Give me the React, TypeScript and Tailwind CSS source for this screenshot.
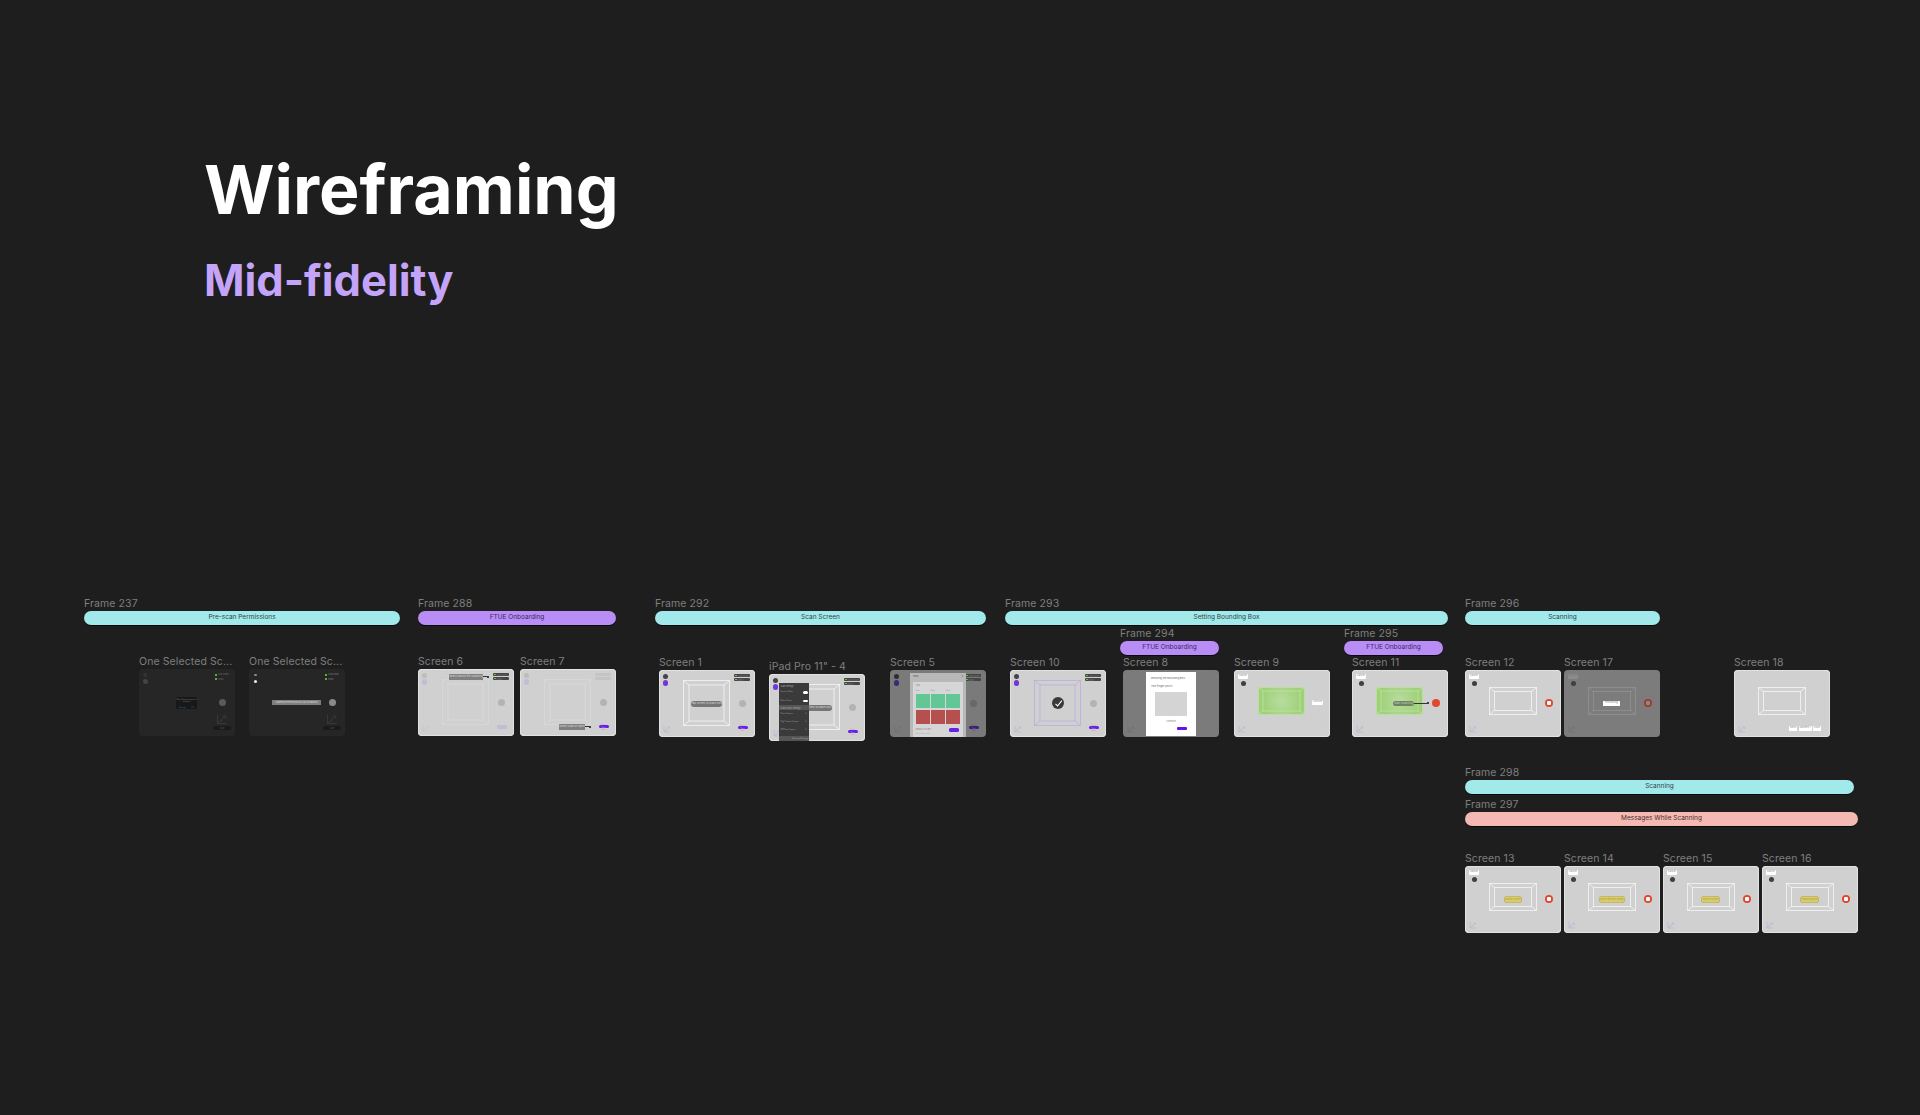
import React from "react";

type P = { className?: string; children?: React.ReactNode };

const Label = ({ className = "", children }: P) => (
  <div className={`h-[15px] text-[10.5px] leading-[16px] tracking-[0.1px] text-[#7f7f7f] whitespace-nowrap ${className}`}>{children}</div>
);

const Pill = ({ className = "", children }: P) => (
  <div className={`h-[14px] rounded-full flex items-center justify-center text-[6.5px] text-[#2f4648] shadow-[0_1px_0_#0a0a0a] whitespace-nowrap ${className}`}>
    {children}
  </div>
);

const Teal = ({ className = "", children }: P) => <Pill className={`bg-[#a1e9eb] ${className}`}>{children}</Pill>;
const Purple = ({ className = "", children }: P) => <Pill className={`bg-[#b98df6] text-[#3a2763] ${className}`}>{children}</Pill>;

const Screen = ({ className = "", children }: P) => (
  <div className={`relative w-[96px] h-[67px] rounded-[4px] overflow-hidden ${className}`}>{children}</div>
);

const Light = ({ className = "", children }: P) => (
  <Screen className={`bg-[#d0d0d0] shadow-[inset_0_0_0_1px_#e2e2e2] ${className}`}>{children}</Screen>
);

const Card = ({ label, className = "", children }: { label: string; className?: string; children?: React.ReactNode }) => (
  <div className={`flex flex-col w-[96px] ${className}`}>
    <Label>{label}</Label>
    {children}
  </div>
);

const Dot = ({ className = "" }: P) => <div className={`absolute rounded-full ${className}`} />;

const Tag = ({ className = "", children }: P) => (
  <div className={`flex items-center justify-center text-[2.7px] leading-none whitespace-nowrap overflow-hidden ${className}`}>{children}</div>
);

const Box = ({
  className = "",
  w,
  h,
  ix = 6,
  iy = 5,
  color = "#f6f6f6",
  sw = 0.8,
}: {
  className?: string;
  w: number;
  h: number;
  ix?: number;
  iy?: number;
  color?: string;
  sw?: number;
}) => (
  <svg className={`absolute ${className}`} width={w} height={h} viewBox={`0 0 ${w} ${h}`} fill="none" stroke={color} strokeWidth={sw}>
    <rect x="0.5" y="0.5" width={w - 1} height={h - 1} />
    <rect x={ix} y={iy} width={w - ix * 2} height={h - iy * 2} />
    <path d={`M0.5 0.5L${ix} ${iy}M${w - 0.5} 0.5L${w - ix} ${iy}M0.5 ${h - 0.5}L${ix} ${h - iy}M${w - 0.5} ${h - 0.5}L${w - ix} ${h - iy}`} />
  </svg>
);

const WideBox = ({ color }: { color?: string }) => <Box className="left-[24px] top-[17px]" w={48} h={28} ix={5.5} iy={4.5} color={color} />;
const TallBox = ({ color, sw }: { color?: string; sw?: number }) => <Box className="left-[24px] top-[10px]" w={47} h={46} color={color} sw={sw} />;

const Cube = ({ className = "left-[4px] top-[55px]", color = "#b5aed0", size = 8 }: { className?: string; color?: string; size?: number }) => (
  <svg className={`absolute ${className}`} width={size} height={size} viewBox="0 0 8 8" fill="none" stroke={color} strokeWidth="0.6">
    <path d="M1 1V7H7" />
    <path d="M1 7L6 2" />
    <path d="M4.5 2H6.5V4" />
    <path d="M3 4.5L4.5 6" />
  </svg>
);

const Status = ({ faded = false }: { faded?: boolean }) => (
  <div className="absolute left-[75px] top-[4px] w-[16px] flex flex-col gap-[0.8px]">
    {["Scan Mode", "Ready"].map((t) => (
      <div
        key={t}
        className={`h-[3.2px] rounded-[1px] flex items-center gap-[1px] pl-[1px] text-[2px] leading-none overflow-hidden whitespace-nowrap ${
          faded ? "bg-[#c4c4c4] text-[#c4c4c4]" : "bg-[#454545] text-[#777777]"
        }`}
      >
        <span className={`block w-[1.6px] h-[1.6px] rounded-full shrink-0 ${faded ? "bg-[#c4c4c4]" : "bg-[#6fd13c]"}`} />
        {t}
      </div>
    ))}
  </div>
);

const DarkStatus = ({ text = "text-[#666666]" }: { text?: string }) => (
  <div className={`absolute left-[76px] top-[4px] w-[16px] flex flex-col gap-[1.5px] text-[2px] leading-[3px] ${text}`}>
    {["Scan Mode", "Ready"].map((t) => (
      <div key={t} className="flex items-center gap-[1px]">
        <span className="block size-[2px] bg-[#5fae2c]" />
        {t}
      </div>
    ))}
  </div>
);

const Rail = ({ faded = false, dim = false }: { faded?: boolean; dim?: boolean }) => (
  <div className="absolute left-[3.5px] top-[4px] w-[5.5px] flex flex-col items-center gap-[1.5px]">
    <span className={`block size-[4.5px] rounded-full ${faded ? "bg-[#bdbdbd]" : dim ? "bg-[#2e2e2e]" : "bg-[#444444]"}`} />
    <span className={`block size-[5.5px] rounded-full ${faded ? "bg-[#c2bcd8]" : dim ? "bg-[#3f2a70]" : "bg-[#7336dc]"}`} />
  </div>
);

const Shutter = ({ className = "bg-[#b3b3b3]" }: P) => <Dot className={`left-[80px] top-[29.5px] size-[7px] ${className}`} />;

const ScanBtn = ({ className = "left-[78.5px] top-[54px]", dark = false }: { className?: string; dark?: boolean }) => (
  <div className={`absolute w-[10px] flex flex-col items-center text-[1.8px] leading-[2px] ${dark ? "text-[#555555]" : "text-[#a5a5a5]"} ${className}`}>
    <span>Scan</span>
    <span className={`w-[10px] h-[3.4px] rounded-[1.5px] flex items-center justify-center ${dark ? "bg-[#3b1f7a] text-[#7f6fa8]" : "bg-[#6a1ee6] text-[#b9a0f5]"}`}>Start</span>
    <span>Stop</span>
  </div>
);

const Cancel = ({ className = "bg-white text-[#8a8a8a]" }: P) => (
  <div className="absolute left-[4px] top-[4px] flex flex-col items-center gap-[2px]">
    <Tag className={`w-[10px] h-[5px] rounded-[1px] !text-[2.4px] ${className}`}>Cancel</Tag>
    <span className="block size-[5px] rounded-full bg-[#3f3f3f]" />
  </div>
);

const Red = ({ dim = false }: { dim?: boolean }) => (
  <div className={`absolute left-[79.5px] top-[29px] size-[8px] rounded-full flex items-center justify-center ${dim ? "bg-[#9c3a2c]" : "bg-[#e2452c]"}`}>
    <div className={`size-[4px] rounded-[1px] ${dim ? "bg-[#8a8a8a]" : "bg-white"}`} />
  </div>
);

const GreenBox = () => (
  <div className="absolute left-[24px] top-[16.5px] w-[47px] h-[28px] bg-[radial-gradient(circle,#b9dc9f_0%,#a0d17a_70%)]">
    <Box className="left-0 top-0" w={47} h={28} ix={5} iy={4} color="#bfe3a6" />
  </div>
);

const Pointer = ({ className = "" }: P) => (
  <div className={`absolute h-[2px] flex items-center ${className}`}>
    <span className="block flex-1 h-[0.6px] bg-[#333333]" />
    <span className="block size-[2px] rounded-full bg-[#111111]" />
  </div>
);

const Toggle = ({ label }: { label: string }) => (
  <div className="h-[8.5px] px-[1.5px] flex items-center justify-between text-[1.8px] text-[#999999] leading-none">
    <span>{label}</span>
    <span className="block w-[4.5px] h-[2.5px] rounded-full bg-white" />
  </div>
);

const Drawer = () => (
  <div className="absolute left-[10px] top-[9px] w-[30px] h-[58px] bg-[#3a3a3a] flex flex-col">
    <div className="h-[5px] px-[1.5px] flex items-center text-[2px] text-[#aaaaaa] leading-none">Scan Settings</div>
    <Toggle label="Scanner Mode" />
    <Toggle label="Metric Preset" />
    <div className="h-[5px] px-[1.5px] bg-[#555555] flex items-center text-[2px] text-[#aaaaaa] leading-none">Scan Quality Settings</div>
    {["Photo Capture", "High Feature Capture", "HDR Cap Capture"].map((t) => (
      <div key={t} className="h-[8px] px-[1.5px] flex items-center justify-between text-[1.8px] text-[#999999] leading-none">
        <span>{t}</span>
        <span className="text-[#777777]">On</span>
      </div>
    ))}
    <div className="mt-auto h-[5px] bg-[#555555] flex items-center justify-end pr-[1px] text-[1.8px] text-[#aaaaaa] leading-none">Advanced Settings</div>
  </div>
);

const HelpModal = () => (
  <div className="absolute left-[20px] top-[2.5px] w-[56px] h-[64.5px] bg-[#b8b8b8] flex flex-col">
    <div className="h-[9px] shrink-0 px-[3px] flex items-center justify-between text-[2.4px] text-[#555555] leading-none">
      <span>Help</span>
      <span>x</span>
    </div>
    <div className="mx-[3px] flex-1 bg-[#d6d6d6] px-[2.5px] pt-[3px] flex flex-col">
      <span className="text-[2.2px] text-[#888888] leading-none">Tips</span>
      <div className="mt-[2.5px] grid grid-cols-3 gap-x-[1px] gap-y-[2px] text-[1.6px] text-[#999999] leading-[3px]">
        <span>Great</span>
        <span>Great</span>
        <span>Great</span>
        <div className="h-[14px] bg-[#62c795]" />
        <div className="h-[14px] bg-[#62c795]" />
        <div className="h-[14px] bg-[#62c795]" />
        <div className="h-[14px] bg-[#b5504f]" />
        <div className="h-[14px] bg-[#b5504f]" />
        <div className="h-[14px] bg-[#b5504f]" />
      </div>
      <div className="mt-[4px] flex items-center justify-between pr-[2px] text-[2.2px] text-[#888888] leading-none">
        <span>Ready to scan?</span>
        <span className="block w-[10px] h-[3.6px] rounded-[1.5px] bg-[#6a1ee6]" />
      </div>
      <span className="mt-[1px] text-[1.8px] text-[#aaaaaa] leading-none">Start when ready</span>
    </div>
  </div>
);

const Sheet = () => (
  <div className="absolute left-[23px] top-[1.5px] w-[50px] h-[64px] bg-white flex flex-col px-[5px] pt-[5px] text-[2.7px] leading-[3px] text-[#666666] whitespace-nowrap">
    <span>Resizing the Bounding Box</span>
    <span className="mt-[5px]">Two finger pinch</span>
    <div className="mt-[4px] mx-[4px] h-[24px] bg-[#d4d4d4]" />
    <span className="mt-[4px] self-center text-[2.2px] text-[#777777]">Continue</span>
    <div className="mt-[4px] ml-[26px] w-[10px] h-[3.5px] rounded-[1px] bg-[#6a0fe8]" />
  </div>
);

const Yellow = ({ className = "", children }: P) => (
  <Tag className={`absolute top-[30px] h-[6.5px] rounded-full bg-[#d8cc6c] text-[#a89c48] shadow-[inset_0_0_0_0.5px_#b0a65c] ${className}`}>{children}</Tag>
);

const Message = ({ label, w, children }: { label: string; w: string; children?: React.ReactNode }) => (
  <Card label={label}>
    <Light>
      <Cancel />
      <WideBox />
      <Yellow className={w}>{children}</Yellow>
      <Red />
      <Cube />
    </Light>
  </Card>
);

const DarkBase = ({ dot }: { dot: string }) => (
  <>
    <Shutter className={dot} />
    <Cube className="left-[77px] top-[44px]" color="#3a3a3a" size={12} />
    <Tag className="absolute left-[74px] top-[57px] w-[18px] h-[3.5px] rounded-full bg-[#1a1a1a] text-[#555555] !text-[2px]">Scan</Tag>
  </>
);

export default function App() {
  return (
    <div className="w-[1920px] h-[1115px] overflow-hidden bg-[#1e1e1e] font-['Inter',sans-serif]">
      <div className="pl-[204px] pt-[146px] flex flex-col">
        <h1 className="text-[68px] leading-[86px] font-bold text-white">Wireframing</h1>
        <h2 className="mt-[21px] text-[43.5px] leading-[54px] font-bold text-[#c4a4f9]">Mid-fidelity</h2>
      </div>

      <div className="mt-[289px] ml-[84px] flex items-start">
        {/* Frame 237 */}
        <div className="w-[316px] flex flex-col">
          <Label>Frame 237</Label>
          <Teal>Pre-scan Permissions</Teal>
          <div className="pt-[29px] pl-[55px] flex gap-[14px]">
            <Card label="One Selected Sc...">
              <Screen className="bg-[#262626]">
                <Dot className="left-[4px] top-[4px] size-[4px] bg-[#333333]" />
                <Dot className="left-[4px] top-[10px] size-[5px] bg-[#444444]" />
                <DarkStatus />
                <div className="absolute left-[37px] top-[28px] w-[21px] h-[12px] bg-[#181818] rounded-[1px] flex flex-col items-center justify-between py-[1px] text-[1.8px] leading-[2px] text-[#777777]">
                  <span className="text-center">Allow Camera access to continue</span>
                  <span className="w-full flex justify-around text-[#2f5f9e]">
                    <span>Settings</span>
                    <span>OK</span>
                  </span>
                </div>
                <DarkBase dot="bg-[#5a5a5a]" />
              </Screen>
            </Card>
            <Card label="One Selected Sc...">
              <Screen className="bg-[#262626]">
                <Dot className="left-[5px] top-[4.5px] size-[2.5px] bg-[#888888]" />
                <Dot className="left-[4.5px] top-[10.5px] size-[3.5px] bg-[#eeeeee]" />
                <DarkStatus text="text-[#777777]" />
                <Tag className="absolute left-[23px] top-[30.5px] w-[49px] h-[5.5px] rounded-[0.5px] bg-[#7f7f7f] text-[#d8d8d8]">Camera Permissions not Enabled</Tag>
                <DarkBase dot="bg-[#8a8a8a]" />
              </Screen>
            </Card>
          </div>
        </div>

        {/* Frame 288 */}
        <div className="ml-[18px] w-[198px] flex flex-col">
          <Label>Frame 288</Label>
          <Purple>FTUE Onboarding</Purple>
          <div className="pt-[29px] flex gap-[6px]">
            <Card label="Screen 6">
              <Light>
                <Rail faded />
                <TallBox color="#d9d9d9" />
                <Tag className="absolute left-[31px] top-[5px] w-[34px] h-[5.5px] rounded-[0.5px] bg-[#808080] text-[#dcdcdc]">Select device for scanning</Tag>
                <Pointer className="left-[65px] top-[6.5px] w-[6px]" />
                <Status />
                <Shutter />
                <Cube color="#c4c4c4" />
                <div className="absolute left-[79px] top-[56px] w-[9.5px] h-[3.5px] rounded-[1px] bg-[#c3bcd6]" />
              </Light>
            </Card>
            <Card label="Screen 7">
              <Light>
                <Rail faded />
                <TallBox color="#d9d9d9" />
                <Status faded />
                <Shutter />
                <Tag className="absolute left-[39px] top-[55px] w-[26px] h-[5.5px] rounded-[0.5px] bg-[#808080] text-[#dcdcdc]">Select scan or open</Tag>
                <Pointer className="left-[65px] top-[56.5px] w-[6px]" />
                <ScanBtn />
              </Light>
            </Card>
          </div>
        </div>

        {/* Frame 292 */}
        <div className="ml-[39px] w-[331px] flex flex-col">
          <Label>Frame 292</Label>
          <Teal>Scan Screen</Teal>
          <div className="pt-[30px] pl-[4px] flex items-start">
            <Card label="Screen 1">
              <Light>
                <Rail />
                <TallBox />
                <Tag className="absolute left-[32px] top-[31px] w-[31px] h-[5.5px] rounded-full bg-[#767676] text-[#d8d8d8]">Tap screen to place box</Tag>
                <Status />
                <Shutter />
                <Cube />
                <ScanBtn />
              </Light>
            </Card>
            <Card label={'iPad Pro 11" - 4'} className="ml-[14px] mt-[4px]">
              <Light>
                <Rail />
                <TallBox />
                <Tag className="absolute left-[32px] top-[31px] w-[31px] h-[5.5px] rounded-full bg-[#767676] text-[#d8d8d8] !justify-end pr-[1px]">Tap screen to place box</Tag>
                <Status />
                <Shutter />
                <Cube />
                <ScanBtn />
                <Drawer />
              </Light>
            </Card>
            <Card label="Screen 5" className="ml-[25px]">
              <Screen className="bg-[#7a7a7a]">
                <Rail dim />
                <Status />
                <Shutter className="bg-[#686868]" />
                <Cube color="#6e6e6e" />
                <ScanBtn className="left-[79px] top-[54px]" dark />
                <HelpModal />
              </Screen>
            </Card>
          </div>
        </div>

        {/* Frame 293 */}
        <div className="ml-[19px] w-[443px] flex flex-col">
          <Label>Frame 293</Label>
          <Teal>Setting Bounding Box</Teal>
          <div className="pt-px pl-[5px] flex items-end">
            <Card label="Screen 10">
              <Light>
                <Rail />
                <TallBox color="#bba8e2" sw={0.7} />
                <div className="absolute left-[42px] top-[27px] size-[12px] rounded-full bg-[#3a3a3a] flex items-center justify-center">
                  <svg width="9" height="9" viewBox="0 0 9 9" fill="none" stroke="#ffffff" strokeWidth="1.1">
                    <path d="M1.5 4.8L3.6 7L7.8 1.6" />
                  </svg>
                </div>
                <Status />
                <Shutter />
                <Cube />
                <ScanBtn />
              </Light>
            </Card>
            <div className="ml-[17px] flex flex-col w-[96px]">
              <div className="-ml-[3px] w-[99px]">
                <Label>Frame 294</Label>
                <Purple>FTUE Onboarding</Purple>
              </div>
              <Label>Screen 8</Label>
              <Screen className="bg-[#7b7b7b]">
                <Cube color="#6e6e6e" />
                <Sheet />
              </Screen>
            </div>
            <Card label="Screen 9" className="ml-[15px]">
              <Light>
                <Cancel />
                <GreenBox />
                <Tag className="absolute left-[78px] top-[29.5px] w-[11px] h-[5.5px] rounded-[1px] bg-white text-[#8a8a8a] !text-[2.4px]">Confirm</Tag>
                <Cube />
              </Light>
            </Card>
            <div className="ml-[22px] flex flex-col w-[96px]">
              <div className="-ml-[8px] w-[99px]">
                <Label>Frame 295</Label>
                <Purple>FTUE Onboarding</Purple>
              </div>
              <Label>Screen 11</Label>
              <Light>
                <Cancel />
                <GreenBox />
                <Tag className="absolute left-[41px] top-[30.5px] w-[21px] h-[5.5px] rounded-full bg-[#6f8264] text-[#c6d2bc]">Start Scanning</Tag>
                <Pointer className="left-[62px] top-[32px] w-[15px]" />
                <Dot className="left-[79.5px] top-[29px] size-[8px] bg-[#e2482e]" />
                <Cube />
              </Light>
            </div>
          </div>
        </div>

        {/* Frames 296 – 298 */}
        <div className="ml-[17px] w-[393px] flex flex-col">
          <Label>Frame 296</Label>
          <Teal className="w-[195px]">Scanning</Teal>
          <div className="pt-[30px] flex">
            <Card label="Screen 12">
              <Light>
                <Cancel />
                <WideBox />
                <Red />
                <Cube />
              </Light>
            </Card>
            <Card label="Screen 17" className="ml-[3px]">
              <Screen className="bg-[#7c7c7c]">
                <Cancel className="bg-[#8c8c8c] text-[#777777]" />
                <WideBox color="#929292" />
                <Tag className="absolute left-[39px] top-[30.5px] w-[17px] h-[5.5px] rounded-[0.5px] bg-white text-[#8a8a8a] !text-[2.4px]">Processing</Tag>
                <Red dim />
                <Cube color="#6e6e6e" />
              </Screen>
            </Card>
            <Card label="Screen 18" className="ml-[74px]">
              <Light>
                <WideBox />
                <Cube />
                <div className="absolute left-[55px] top-[56px] flex gap-[1.5px]">
                  <Tag className="w-[8px] h-[5px] rounded-[0.5px] bg-white text-[#8a8a8a] !text-[2.4px]">Mesh</Tag>
                  <Tag className="w-[13px] h-[5px] rounded-[0.5px] bg-white text-[#8a8a8a] !text-[2.4px]">Geometry</Tag>
                  <Tag className="w-[8px] h-[5px] rounded-[0.5px] bg-white text-[#8a8a8a] !text-[2.4px]">Color</Tag>
                </div>
              </Light>
            </Card>
          </div>

          <Label className="mt-[28px]">Frame 298</Label>
          <Teal className="w-[389px]">Scanning</Teal>
          <Label className="mt-[3px]">Frame 297</Label>
          <Pill className="bg-[#f5b9b4] text-[#4a2b29]">Messages While Scanning</Pill>
          <div className="pt-[25px] flex gap-[3px]">
            <Message label="Screen 13" w="left-[39px] w-[18px]">Move closer</Message>
            <Message label="Screen 14" w="left-[35px] w-[26px]">Move farther away</Message>
            <Message label="Screen 15" w="left-[38px] w-[19px]">Move closer</Message>
            <Message label="Screen 16" w="left-[38px] w-[19px]">Tracking lost</Message>
          </div>
        </div>
      </div>
    </div>
  );
}
